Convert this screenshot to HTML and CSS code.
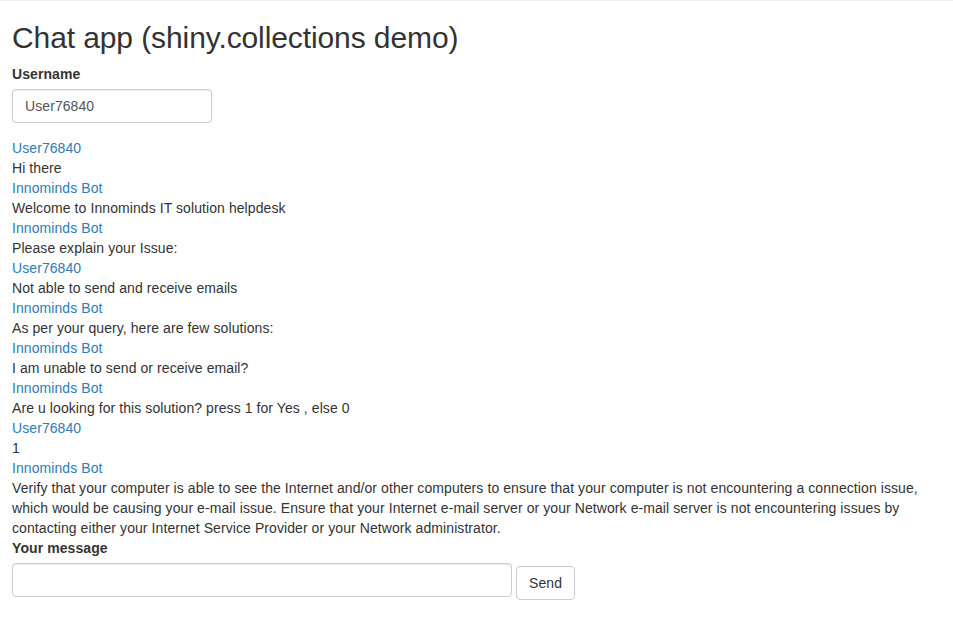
FILE: index.html
```html
<!DOCTYPE html>
<html>
<head>
<meta charset="utf-8">
<title>Chat app</title>
<link rel="stylesheet" href="styles.css">
</head>
<body>
<div class="topline"></div>
<div class="page">
  <h2 class="title">Chat app (shiny.collections demo)</h2>
  <div class="form-group">
    <label class="label" for="username">Username</label>
    <input class="form-control username" id="username" type="text" value="User76840">
  </div>
  <div class="chat">
    <div class="user">User76840</div>
    <div class="msg">Hi there</div>
    <div class="user">Innominds Bot</div>
    <div class="msg">Welcome to Innominds IT solution helpdesk</div>
    <div class="user">Innominds Bot</div>
    <div class="msg">Please explain your Issue:</div>
    <div class="user">User76840</div>
    <div class="msg">Not able to send and receive emails</div>
    <div class="user">Innominds Bot</div>
    <div class="msg">As per your query, here are few solutions:</div>
    <div class="user">Innominds Bot</div>
    <div class="msg">I am unable to send or receive email?</div>
    <div class="user">Innominds Bot</div>
    <div class="msg">Are u looking for this solution? press 1 for Yes , else 0</div>
    <div class="user">User76840</div>
    <div class="msg">1</div>
    <div class="user">Innominds Bot</div>
    <div class="msg">Verify that your computer is able to see the Internet and/or other computers to ensure that your computer is not encountering a connection issue, which would be causing your e-mail issue. Ensure that your Internet e-mail server or your Network e-mail server is not encountering issues by contacting either your Internet Service Provider or your Network administrator.</div>
  </div>
  <label class="label" for="message">Your message</label>
  <div class="send-row">
    <input class="form-control message" id="message" type="text" value="">
    <button class="btn" type="button">Send</button>
  </div>
</div>
</body>
</html>
```
FILE: styles.css
```css
html, body {
  margin: 0;
  padding: 0;
  background: #fff;
}
body {
  font-family: "Liberation Sans", Arial, Helvetica, sans-serif;
  font-size: 14px;
  line-height: 20px;
  color: #333;
  letter-spacing: 0.08px;
}
.topline {
  height: 1px;
  background: #eeeeee;
}
.page {
  padding: 0 12px;
}
.title {
  font-size: 30px;
  font-weight: 500;
  line-height: 33px;
  margin: 20px 0 10px;
  color: #333;
  letter-spacing: -0.1px;
}
.form-group {
  margin-bottom: 15px;
}
.label {
  display: inline-block;
  font-weight: bold;
  margin-bottom: 5px;
}
.form-control {
  display: block;
  box-sizing: border-box;
  height: 34px;
  padding: 6px 12px;
  font-family: inherit;
  font-size: 14px;
  line-height: 20px;
  letter-spacing: inherit;
  color: #555;
  background: #fff;
  border: 1px solid #ccc;
  border-radius: 4px;
  box-shadow: inset 0 1px 1px rgba(0,0,0,.075);
  margin: 0;
}
.username {
  width: 200px;
}
.message {
  width: 500px;
}
.user {
  color: #337ab7;
}
.send-row {
  display: flex;
  align-items: flex-start;
  gap: 4px;
}
.btn {
  box-sizing: border-box;
  height: 34px;
  margin-top: 3px;
  padding: 6px 12px;
  font-family: inherit;
  font-size: 14px;
  line-height: 20px;
  letter-spacing: inherit;
  color: #333;
  background: #fff;
  border: 1px solid #ccc;
  border-radius: 4px;
}
```
